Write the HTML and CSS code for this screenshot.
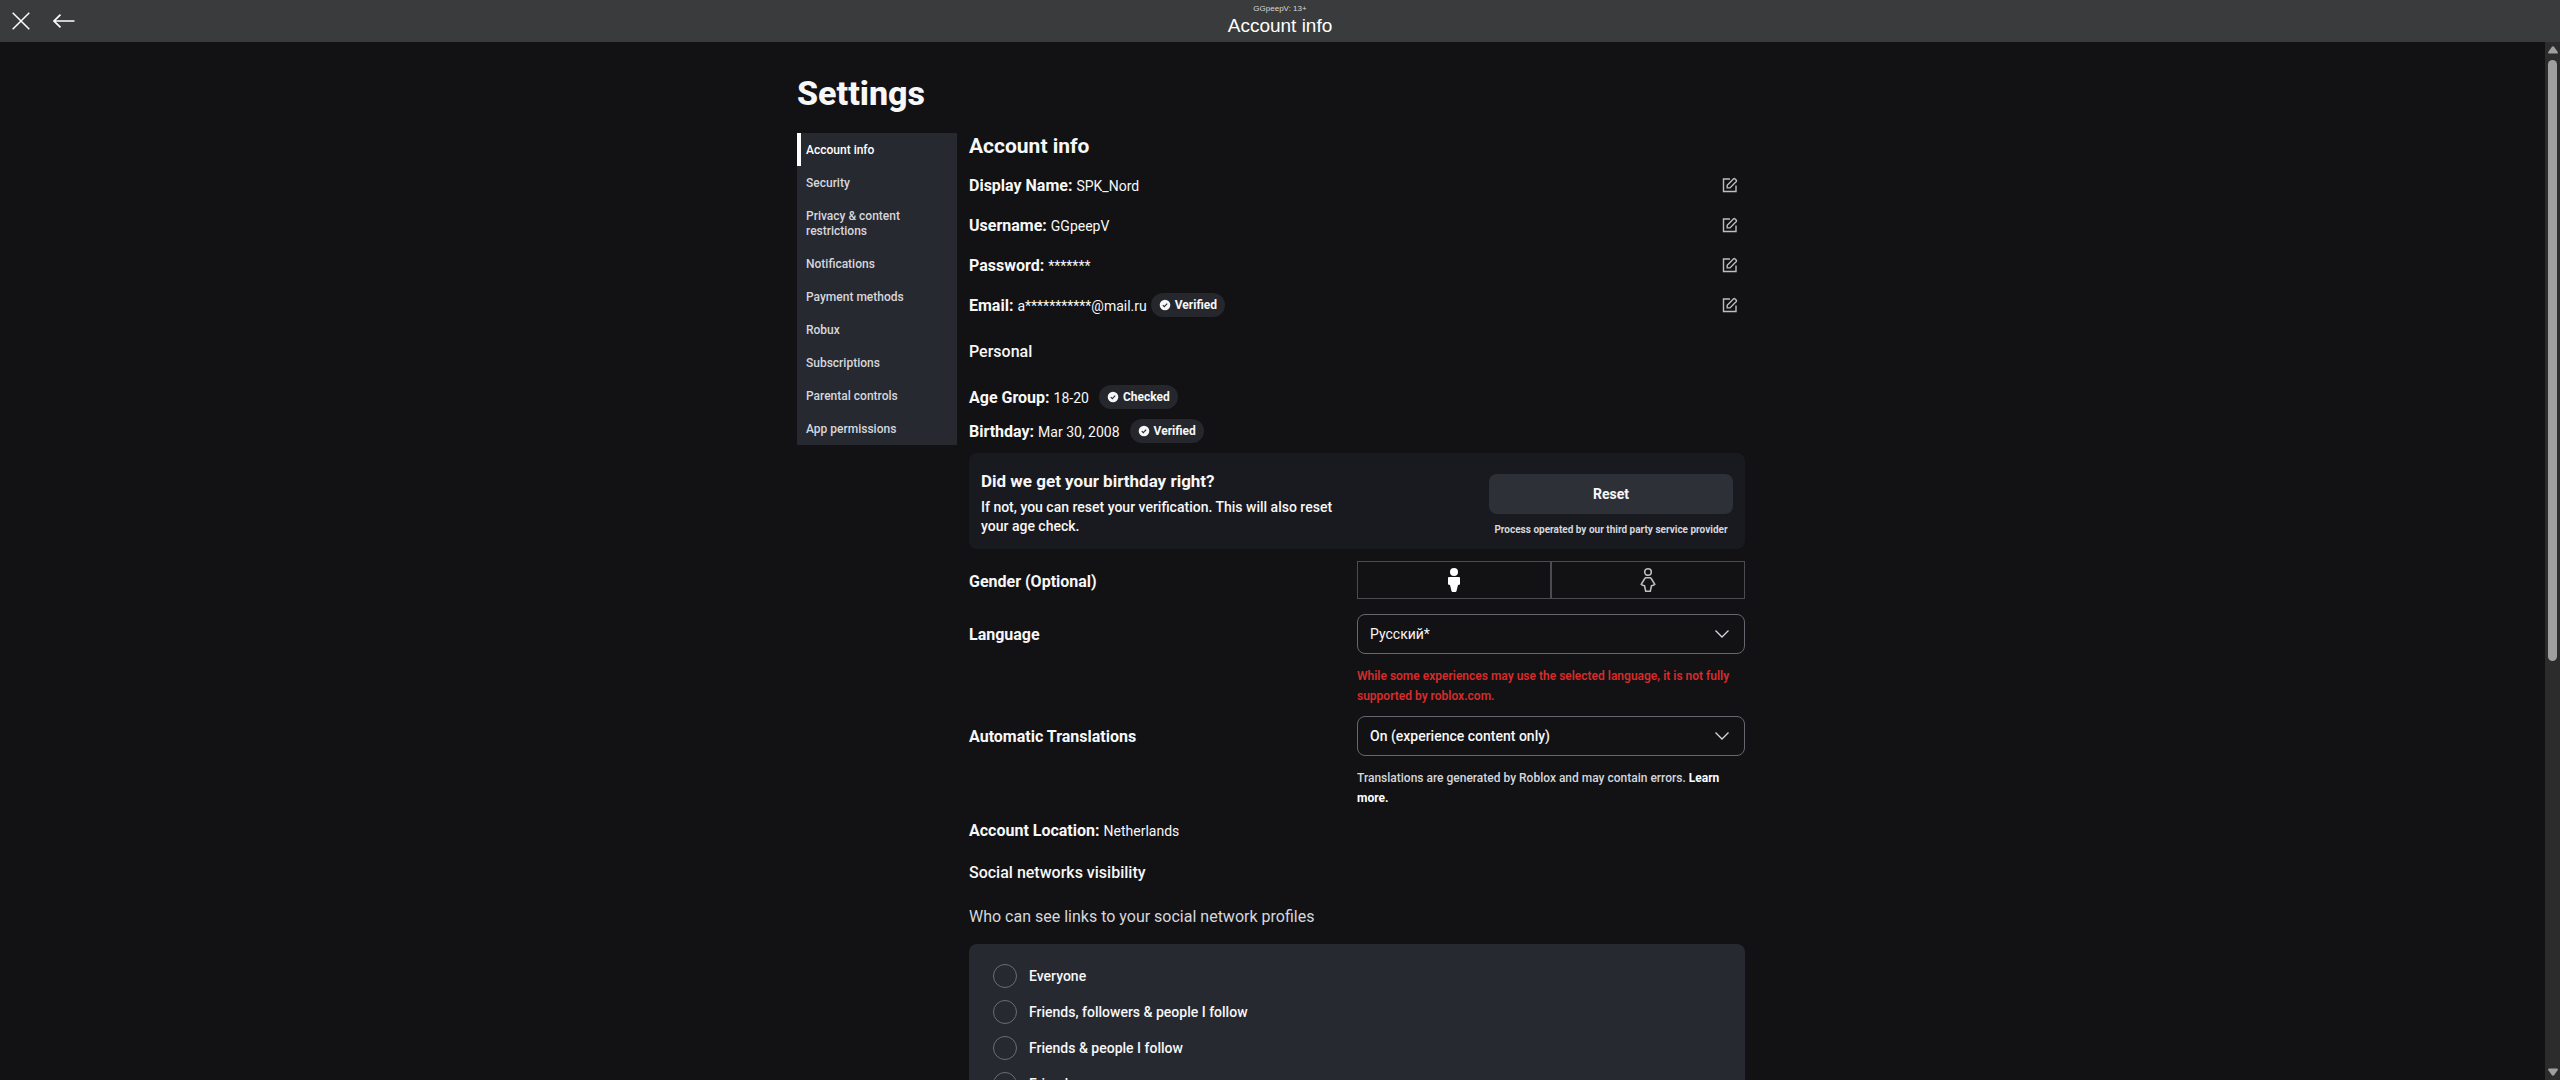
FILE: index.html
```html
<!DOCTYPE html>
<html lang="en">
<head>
    <meta charset="UTF-8">
    <meta name="viewport" content="width=device-width, initial-scale=1.0">
    <title>Account info</title>
    <link rel="stylesheet" href="styles.css">
</head>
<body>
    <!-- shared icons -->
    <svg class="sprite" aria-hidden="true">
        <symbol id="icon-edit" viewBox="0 0 16 16">
            <path d="M8 2H1.5v12.5H14V8.5" fill="none" stroke="currentColor" stroke-width="1.4"/>
            <path d="M5.2 10.9V8.2l6.4-6.4q.6-.5 1.2 0l1.5 1.5q.5.6 0 1.2L8 10.9z" fill="none" stroke="currentColor" stroke-width="1.4"/>
        </symbol>
        <symbol id="icon-check" viewBox="0 0 12 12">
            <circle cx="6" cy="6" r="5.3" fill="currentColor"/>
            <path d="M3.8 6.2l1.5 1.5 2.9-3" fill="none" stroke="#25272d" stroke-width="1.1"/>
        </symbol>
        <symbol id="icon-chevron" viewBox="0 0 16 10">
            <path d="M1.5 1.5L8 8l6.5-6.5" fill="none" stroke="currentColor" stroke-width="1.3"/>
        </symbol>
    </svg>

    <header class="topbar">
        <div class="topbar-actions">
            <button class="topbar-btn" type="button" aria-label="Close">
                <svg width="18" height="18" viewBox="0 0 18 18"><path d="M.7.7l16.6 16.6M17.3.7L.7 17.3" fill="none" stroke="currentColor" stroke-width="1.5"/></svg>
            </button>
            <button class="topbar-btn" type="button" aria-label="Back">
                <svg width="22" height="14" viewBox="0 0 22 14"><path d="M1 7h20.5M7.500.7L1 7l6.5 6.3" fill="none" stroke="currentColor" stroke-width="1.7"/></svg>
            </button>
        </div>
        <div class="topbar-title">
            <span class="topbar-user">GGpeepV: 13+</span>
            <span class="topbar-page">Account info</span>
        </div>
    </header>

    <div class="viewport">
        <div class="page">
            <div class="container">
                <h1>Settings</h1>
                <div class="columns">
                    <nav class="menu">
                        <a class="menu-item active" href="#account">Account info</a>
                        <a class="menu-item" href="#security">Security</a>
                        <a class="menu-item" href="#privacy">Privacy &amp; content restrictions</a>
                        <a class="menu-item" href="#notifications">Notifications</a>
                        <a class="menu-item" href="#payment">Payment methods</a>
                        <a class="menu-item" href="#robux">Robux</a>
                        <a class="menu-item" href="#subscriptions">Subscriptions</a>
                        <a class="menu-item" href="#parental">Parental controls</a>
                        <a class="menu-item" href="#apps">App permissions</a>
                    </nav>

                    <main class="content">
                        <h2>Account info</h2>
                        <div class="row">
                            <span class="label">Display Name:</span>
                            <span class="value">SPK_Nord</span>
                            <button class="edit" type="button" aria-label="Edit display name"><svg><use href="#icon-edit"/></svg></button>
                        </div>
                        <div class="row">
                            <span class="label">Username:</span>
                            <span class="value">GGpeepV</span>
                            <button class="edit" type="button" aria-label="Edit username"><svg><use href="#icon-edit"/></svg></button>
                        </div>
                        <div class="row">
                            <span class="label">Password:</span>
                            <span class="value">*******</span>
                            <button class="edit" type="button" aria-label="Edit password"><svg><use href="#icon-edit"/></svg></button>
                        </div>
                        <div class="row">
                            <span class="label">Email:</span>
                            <span class="value">a***********@mail.ru</span>
                            <span class="pill"><svg><use href="#icon-check"/></svg>Verified</span>
                            <button class="edit" type="button" aria-label="Edit email"><svg><use href="#icon-edit"/></svg></button>
                        </div>

                        <h3 class="personal">Personal</h3>
                        <div class="row short">
                            <span class="label">Age Group:</span>
                            <span class="value">18-20</span>
                            <span class="pill spaced"><svg><use href="#icon-check"/></svg>Checked</span>
                        </div>
                        <div class="row short">
                            <span class="label">Birthday:</span>
                            <span class="value">Mar 30, 2008</span>
                            <span class="pill spaced"><svg><use href="#icon-check"/></svg>Verified</span>
                        </div>

                        <section class="card">
                            <div class="card-text">
                                <h4>Did we get your birthday right?</h4>
                                <p>If not, you can reset your verification. This will also reset your age check.</p>
                            </div>
                            <div class="card-action">
                                <button class="reset" type="button">Reset</button>
                                <p>Process operated by our third party service provider</p>
                            </div>
                        </section>

                        <div class="field gender">
                            <span class="label">Gender (Optional)</span>
                            <div class="gender-group">
                                <button type="button" aria-label="Male">
                                    <svg width="16" height="26" viewBox="0 0 16 26">
                                        <circle cx="8" cy="5" r="4" fill="#fff"/>
                                        <path d="M3 10h10q1 0 1 1v6q0 1-2 1l-1.500 6q-.3 1-1 1h-3q-.7 0-1-1L4 18q-2 0-2-1v-6q0-1 1-1z" fill="#fff"/>
                                    </svg>
                                </button>
                                <button type="button" aria-label="Female">
                                    <svg width="16" height="26" viewBox="0 0 16 26">
                                        <circle cx="8" cy="5" r="3.3" fill="none" stroke="#bdbebe" stroke-width="1.6"/>
                                        <path d="M6 10.800h4q.8 0 1.200.7l3.600 5.800q-1.200 1.300-3.300 1.400l-1.200 5.500H5.700l-1.200-5.500q-2.100-.1-3.300-1.400l3.600-5.800q.4-.7 1.200-.7z" fill="none" stroke="#bdbebe" stroke-width="1.6"/>
                                    </svg>
                                </button>
                            </div>
                        </div>

                        <div class="field">
                            <label class="label" for="language">Language</label>
                            <div>
                                <div class="select">
                                    <select id="language" class="regular"><option>Русский*</option></select>
                                    <svg><use href="#icon-chevron"/></svg>
                                </div>
                                <p class="note error">While some experiences may use the selected language, it is not fully supported by roblox.com.</p>
                            </div>
                        </div>

                        <div class="field">
                            <label class="label" for="translations">Automatic Translations</label>
                            <div>
                                <div class="select">
                                    <select id="translations"><option>On (experience content only)</option></select>
                                    <svg><use href="#icon-chevron"/></svg>
                                </div>
                                <p class="note">Translations are generated by Roblox and may contain errors. <a href="#learn">Learn more.</a></p>
                            </div>
                        </div>

                        <div class="row location">
                            <span class="label">Account Location:</span>
                            <span class="value">Netherlands</span>
                        </div>

                        <h3 class="social">Social networks visibility</h3>
                        <p class="question" id="question">Who can see links to your social network profiles</p>
                        <div class="options" role="radiogroup" aria-labelledby="question">
                            <label><input type="radio" name="visibility">Everyone</label>
                            <label><input type="radio" name="visibility">Friends, followers &amp; people I follow</label>
                            <label><input type="radio" name="visibility">Friends &amp; people I follow</label>
                            <label><input type="radio" name="visibility">Friends</label>
                        </div>
                    </main>
                </div>
            </div>
        </div>

        <div class="scrollbar" aria-hidden="true">
            <svg width="10" height="8" viewBox="0 0 10 8"><path d="M3.800 1q1.200-1.600 2.400 0l3.400 4.700q.8 1.800-1 1.800H1.400q-1.800 0-1-1.800z" fill="#9f9f9f"/></svg>
            <div class="track"><div class="thumb"></div></div>
            <svg width="10" height="8" viewBox="0 0 10 8"><path d="M3.800 7q1.200 1.600 2.400 0l3.400-4.700Q10.400.5 8.600.5H1.400Q-.4.5.4 2.300z" fill="#9f9f9f"/></svg>
        </div>
    </div>
</body>
</html>
```
FILE: styles.css
```css
* {
    box-sizing: border-box;
}
body {
    margin: 0;
    height: 100vh;
    display: flex;
    flex-direction: column;
    overflow: hidden;
    background: #121214;
    color: #f7f7f8;
    font-family: Roboto, "Liberation Sans", sans-serif;
    font-size: 14px;
    font-weight: 500;
}
h1, h2, h3, h4, p {
    margin: 0;
}
button, select {
    font: inherit;
    color: inherit;
}
button {
    cursor: pointer;
    padding: 0;
    border: none;
    background: none;
}
a {
    color: inherit;
    text-decoration: none;
}
.sprite {
    display: none;
}

/* top bar */
.topbar {
    display: grid;
    grid-template-columns: 1fr auto 1fr;
    height: 42px;
    flex-shrink: 0;
    background: #3a3b3c;
    color: #fff;
    font-family: "Liberation Sans", Arial, sans-serif;
    font-weight: 400;
}
.topbar-actions {
    display: flex;
    align-items: center;
    gap: 23px;
    padding-left: 12px;
}
.topbar-btn {
    display: flex;
}
.topbar-title {
    display: flex;
    flex-direction: column;
    align-items: center;
    padding-top: 3px;
}
.topbar-user {
    font-size: 8px;
    line-height: 11px;
    color: #d8d8d8;
}
.topbar-page {
    font-size: 19px;
    line-height: 24px;
}

/* page */
.viewport {
    display: flex;
    flex: 1;
    min-height: 0;
}
.page {
    flex: 1;
    overflow: hidden;
}
.container {
    max-width: 971px;
    margin: 0 auto;
    padding: 32px 13px 0 10px;
}
h1 {
    font-size: 34px;
    line-height: 38px;
    font-weight: 800;
    margin-bottom: 21px;
}
.columns {
    display: flex;
    align-items: flex-start;
    gap: 12px;
}

/* side menu */
.menu {
    width: 160px;
    flex-shrink: 0;
    background: #272930;
}
.menu-item {
    display: block;
    padding: 10px 24px 8px 9px;
    font-size: 12px;
    line-height: 15px;
    color: #d5d7dd;
}
.menu-item.active {
    padding-left: 5px;
    border-left: 4px solid #fff;
    color: #fff;
}

/* account info */
.content {
    flex: 1;
}
h2 {
    font-size: 21px;
    line-height: 26px;
    font-weight: 700;
    margin-bottom: 6px;
}
h3 {
    font-size: 16px;
    line-height: 24px;
    font-weight: 500;
}
.row {
    display: flex;
    align-items: center;
    gap: 4px;
    height: 40px;
}
.row.short {
    height: 34px;
}
.row.location {
    height: 24px;
}
.label {
    font-size: 16px;
    line-height: 24px;
    font-weight: 700;
}
.value {
    line-height: 24px;
    font-weight: 400;
}
.row .label,
.row .value {
    padding-top: 2px;
}
.pill {
    display: flex;
    align-items: center;
    gap: 4px;
    height: 24px;
    padding: 0 8px;
    border-radius: 12px;
    background: #25272d;
    font-size: 12px;
    font-weight: 700;
}
.pill.spaced {
    margin-left: 6px;
}
.pill svg {
    width: 12px;
    height: 12px;
}
.edit {
    display: flex;
    margin-left: auto;
    margin-right: 7px;
    color: #bdbebe;
}
.edit svg {
    width: 16px;
    height: 16px;
}
.personal {
    margin: 15px 0 16px;
}

/* birthday card */
.card {
    display: flex;
    justify-content: space-between;
    margin: 5px 0 12px;
    padding: 16px 12px 0;
    height: 96px;
    border-radius: 8px;
    background: #191a1f;
}
.card-text {
    width: 360px;
}
.card-text h4 {
    font-size: 17px;
    line-height: 24px;
    font-weight: 700;
}
.card-text p {
    line-height: 19px;
    padding-top: 5px;
}
.card-action {
    width: 244px;
    padding-top: 5px;
}
.card-action p {
    padding-top: 6px;
    font-size: 10px;
    line-height: 20px;
    font-weight: 700;
    text-align: center;
    color: #d5d7dd;
}
.reset {
    display: block;
    width: 100%;
    height: 40px;
    border-radius: 8px;
    background: #2e3038;
    font-weight: 700;
}

/* form fields */
.field {
    display: grid;
    grid-template-columns: 1fr 1fr;
    margin-bottom: 6px;
}
.field .label {
    padding-top: 9px;
}
.gender {
    margin-bottom: 15px;
}
.gender-group {
    display: flex;
}
.gender-group button {
    display: flex;
    flex: 1;
    height: 38px;
    align-items: center;
    justify-content: center;
    border: 1px solid #4b4c52;
}
.select {
    position: relative;
}
.select select {
    appearance: none;
    display: block;
    width: 100%;
    height: 40px;
    padding: 0 12px;
    border: 1px solid #66686f;
    border-radius: 8px;
    background: #121214;
}
.select .regular {
    font-weight: 400;
}
.select svg {
    position: absolute;
    top: 15px;
    right: 15px;
    width: 16px;
    height: 10px;
    color: #d5d7dd;
    pointer-events: none;
}
.note {
    padding-top: 12px;
    padding-bottom: 4px;
    font-size: 12px;
    line-height: 20px;
    color: #d5d7dd;
}
.note a {
    color: #fff;
    font-weight: 700;
}
.note.error {
    color: #d92b2b;
    font-weight: 600;
}

/* social networks */
.social {
    margin-top: 19px;
}
.question {
    margin: 20px 0 15px;
    font-size: 16px;
    line-height: 24px;
    font-weight: 400;
    color: #d5d7dd;
}
.options {
    display: flex;
    flex-direction: column;
    gap: 12px;
    padding: 20px 24px;
    border-radius: 8px;
    background: #272930;
}
.options label {
    display: flex;
    align-items: center;
    gap: 12px;
    height: 24px;
}
.options input {
    appearance: none;
    width: 24px;
    height: 24px;
    margin: 0;
    border: 1px solid #6b6d75;
    border-radius: 50%;
}

/* scrollbar */
.scrollbar {
    display: flex;
    flex-direction: column;
    align-items: center;
    gap: 6px;
    width: 15px;
    padding: 4px 0;
    background: #2c2c2c;
}
.track {
    flex: 1;
    width: 9px;
}
.thumb {
    height: 60%;
    border-radius: 5px;
    background: #9f9f9f;
}
```
